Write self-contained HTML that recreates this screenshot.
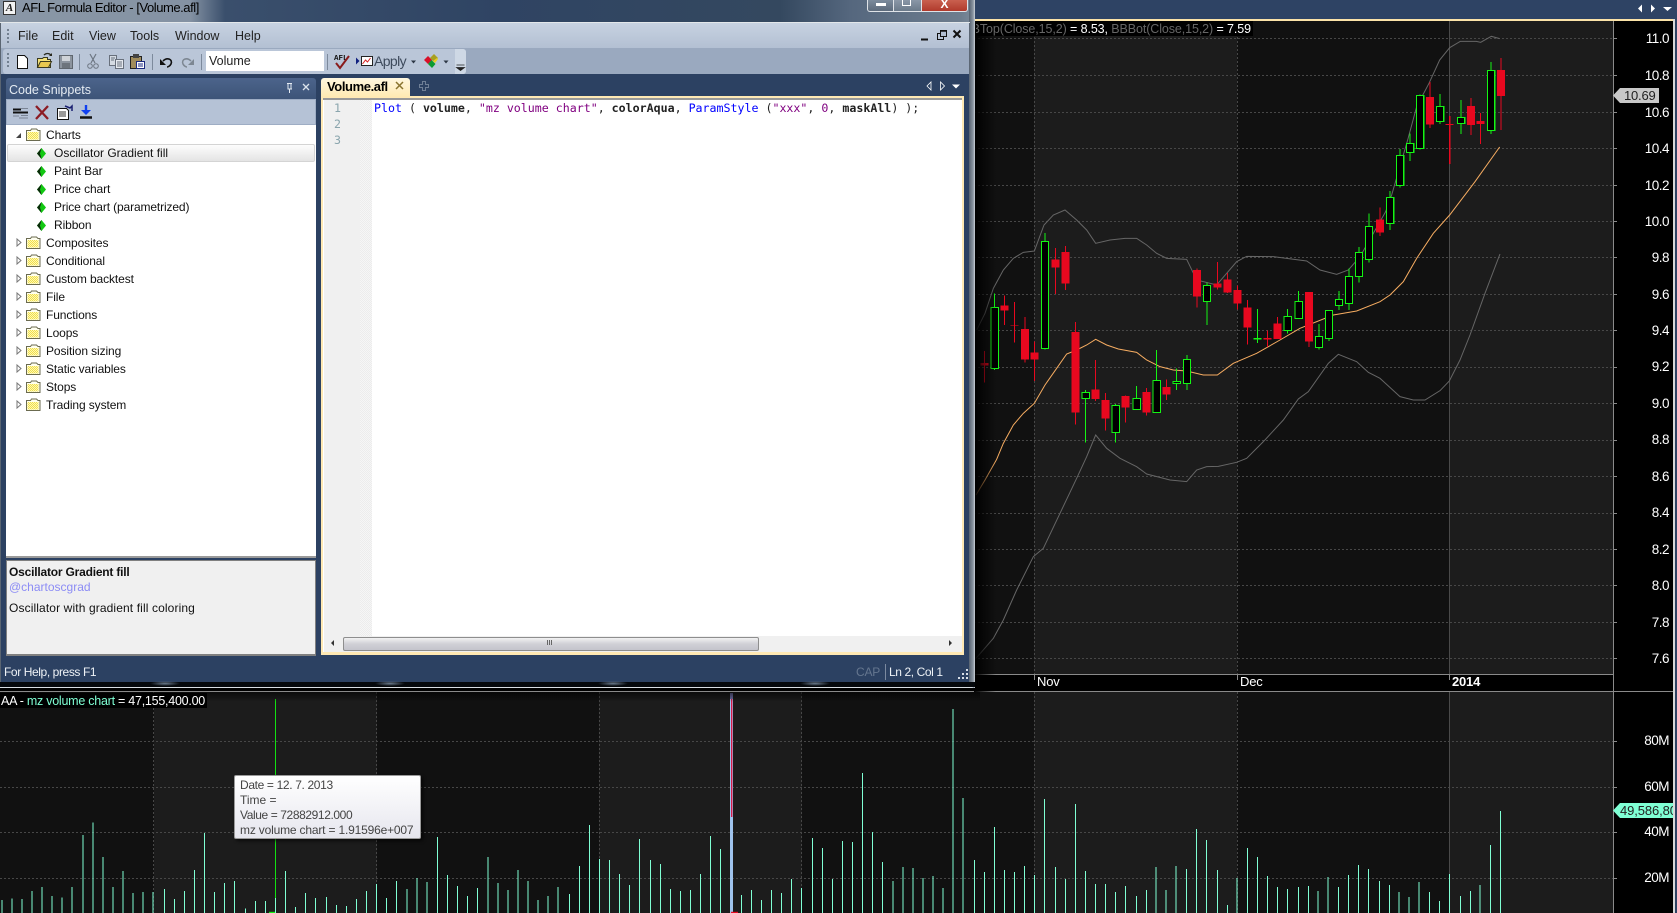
<!DOCTYPE html>
<html><head><meta charset="utf-8"><style>
html,body{margin:0;padding:0;background:#000}
#r{position:relative;width:1677px;height:913px;overflow:hidden;background:#000;font-family:"Liberation Sans",sans-serif;font-size:12px;color:#000}
.a{position:absolute;white-space:nowrap;line-height:16px}
.t{position:absolute;left:0;height:18px;line-height:18px;white-space:nowrap;letter-spacing:-.1px}
svg{position:absolute;left:0;top:0}
.ax{position:absolute;right:8px;color:#fff;font-size:13.5px;letter-spacing:-.5px;line-height:16px;text-align:right}
</style></head><body><div id="r">

<!-- chart tab bar -->
<div style="position:absolute;left:974px;top:0;width:703px;height:19px;background:#2e4364"></div>
<div style="position:absolute;left:974px;top:19px;width:700px;height:2px;background:#fbe3a8"></div>
<div style="position:absolute;left:1673px;top:19px;width:1.5px;height:894px;background:#d8d8d8"></div>
<div style="position:absolute;left:1675px;top:19px;width:2px;height:894px;background:#2e4364"></div>

<!-- bands top -->
<div style="position:absolute;left:974px;top:21px;width:60px;height:653px;background:#111"></div>
<div style="position:absolute;left:1034px;top:21px;width:203px;height:653px;background:#1c1c1c"></div>
<div style="position:absolute;left:1237px;top:21px;width:212px;height:653px;background:#111"></div>
<div style="position:absolute;left:1449px;top:21px;width:164px;height:653px;background:#1c1c1c"></div>
<!-- bands bottom -->
<div style="position:absolute;left:0;top:692px;width:154px;height:221px;background:#111"></div>
<div style="position:absolute;left:154px;top:692px;width:223px;height:221px;background:#1c1c1c"></div>
<div style="position:absolute;left:377px;top:692px;width:222px;height:221px;background:#111"></div>
<div style="position:absolute;left:599px;top:692px;width:203px;height:221px;background:#1c1c1c"></div>
<div style="position:absolute;left:802px;top:692px;width:232px;height:221px;background:#111"></div>
<div style="position:absolute;left:1034px;top:692px;width:203px;height:221px;background:#1c1c1c"></div>
<div style="position:absolute;left:1237px;top:692px;width:212px;height:221px;background:#111"></div>
<div style="position:absolute;left:1449px;top:692px;width:164px;height:221px;background:#1c1c1c"></div>

<svg width="1677" height="913" viewBox="0 0 1677 913" fill="none">
<!-- grid -->
<g stroke="#474747" stroke-width="1" stroke-dasharray="2 2" shape-rendering="crispEdges">
<path d="M974 38.500H1617M974 75.500H1617M974 112.500H1617M974 148.500H1617M974 185.500H1617M974 221.500H1617M974 257.500H1617M974 294.500H1617M974 330.500H1617M974 367.500H1617M974 403.500H1617M974 440.500H1617M974 476.500H1617M974 513.500H1617M974 549.500H1617M974 585.500H1617M974 622.500H1617M974 658.500H1617"/>
<path d="M1034.500 21V674M1237.500 21V674M0 741.500H1617M0 787.500H1617M0 832.500H1617M0 878.500H1617M153.500 692V913M376.500 692V913M599.500 692V913M801.500 692V913M1034.500 692V913M1237.500 692V913"/>
</g>
<path d="M1449.500 21V674M1449.500 692V913" stroke="#4a4a4a" shape-rendering="crispEdges"/>
<g stroke="#8a8a8a" shape-rendering="crispEdges">
<path d="M1613.500 21V913M974 674.500H1613.500M0 691.500H1673"/>
<path d="M1034.500 674V680M1237.500 674V680M1449.500 674V680"/>
<path d="M1613 38.500h4M1613 75.500h4M1613 112.500h4M1613 148.500h4M1613 185.500h4M1613 221.500h4M1613 257.500h4M1613 294.500h4M1613 330.500h4M1613 367.500h4M1613 403.500h4M1613 440.500h4M1613 476.500h4M1613 513.500h4M1613 549.500h4M1613 585.500h4M1613 622.500h4M1613 658.500h4M1613 741.500h4M1613 787.500h4M1613 832.500h4M1613 878.500h4"/>
</g>

<!-- price lines + candles in 3x space -->
<g transform="translate(970 200) scale(.33333)">
<polyline vector-effect="non-scaling-stroke" stroke="#666" stroke-width="1" points="20,390 45,340 70,265 100,210 130,175 160,157 193,153 222,75 250,45 285,30 320,60 350,90 377,130 420,120 465,115 500,115 530,135 560,160 590,175 650,178 680,240 740,255 770,220 800,185 830,169 910,170 1010,183 1050,210 1100,223 1135,210 1170,170 1210,100 1247,35 1265,-15 1313,-180 1340,-280 1377,-350 1409,-420 1439,-457 1471,-476 1519,-476 1532,-473 1564,-491 1589,-484"/>
<polyline vector-effect="non-scaling-stroke" stroke="#666" stroke-width="1" points="18,1375 70,1315 100,1260 140,1170 190,1070 220,1045 270,940 320,835 350,770 377,705 410,745 450,775 500,800 530,822 600,840 650,845 680,810 710,800 745,799 800,787 830,775 880,725 940,660 985,597 1015,575 1075,490 1105,463 1160,485 1195,517 1230,535 1290,590 1330,600 1365,600 1410,572 1438,543 1470,480 1500,405 1545,280 1590,162"/>
<polyline vector-effect="non-scaling-stroke" stroke="#f7ad62" stroke-width="1" points="18,885 45,840 80,778 100,730 130,675 160,640 193,610 225,555 260,505 290,462 320,450 350,435 377,418 410,435 445,447 500,457 530,480 570,500 610,510 650,513 700,525 742,525 790,490 860,460 930,420 990,385 1090,345 1160,333 1230,305 1260,285 1300,245 1340,175 1390,100 1439,45 1515,-55 1589,-159"/>
<path stroke="#e8081f" stroke-width="3.400" shape-rendering="crispEdges" d="M43 453V548M104 286V375M134 306V428M165 351V488M194 425V543M257 144V282M287 138V270M317 366V674M377 480V603M407 579V692M467 586V668M530 564V647M590 538V600M681 205V323M743 186V269M773 219V279M803 256V329M833 300V434M893 391V441M923 351V417M1017 276V441"/>
<path fill="#e8081f" shape-rendering="crispEdges" d="M31 489h24V497h-24zM92 316h24V332h-24zM122 375h24V377h-24zM153 387h24V479h-24zM182 457h24V479h-24zM245 178h24V203h-24zM275 156h24V251h-24zM305 396h24V638h-24zM365 568h24V597h-24zM395 600h24V656h-24zM455 588h24V623h-24zM518 576h24V638h-24zM578 561h24V584h-24zM669 210h24V290h-24zM731 250h24V263h-24zM761 238h24V278h-24zM791 270h24V311h-24zM821 322h24V383h-24zM881 414h24V418h-24zM911 370h24V417h-24zM1005 276h24V425h-24z"/>
<path stroke="#14f514" stroke-width="3.400" shape-rendering="crispEdges" d="M74 280V510M225 99V449M347 570V728M437 612V728M500 558V630M560 450V638M620 505V570M651 465V570M711 247V375M863 327V429M953 327V401M986 273V356M1047 372V449M1077 331V423M1107 273V330M1137 205V330M1167 141V248M1197 40V188"/>
<path fill="#000" stroke="#14f514" stroke-width="3.400" shape-rendering="crispEdges" d="M63 322h22V505h-22zM214 125h22V445h-22zM336 578h22V595h-22zM426 616h22V697h-22zM489 595h22V628h-22zM549 541h22V637h-22zM609 544h22V550h-22zM640 478h22V550h-22zM700 257h22V304h-22zM942 349h22V391h-22zM975 304h22V355h-22zM1036 409h22V442h-22zM1066 331h22V415h-22zM1096 298h22V316h-22zM1126 230h22V310h-22zM1156 157h22V229h-22zM1186 79h22V178h-22z"/>
<path fill="#14f514" shape-rendering="crispEdges" d="M851 414h24V418h-24z"/>
</g>
<!-- rest of candles, absolute -->
<path stroke="#e8081f" stroke-width="1.100" shape-rendering="crispEdges" d="M1380 207.300V236M1430 82V128M1449.700 116V164M1471 98V135M1480.600 113V144M1501 58V130"/>
<path fill="#e8081f" shape-rendering="crispEdges" d="M1376 219.300h8V232.700h-8zM1426 97h8V124.700h-8zM1445.500 124h8V125.200h-8zM1467 106h8V125h-8zM1476.600 121h8V124h-8zM1497 70h8V96h-8z"/>
<path stroke="#14f514" stroke-width="1.100" shape-rendering="crispEdges" d="M1390 191V230M1400 149V187.700M1410 133.300V161M1420 94.300V149.300M1440 94V124M1461 100V134M1491 62V134"/>
<path fill="#000" stroke="#14f514" stroke-width="1.100" shape-rendering="crispEdges" d="M1386.300 197.300h7.400V223.300h-7.400zM1396.300 155.300h7.400V185.300h-7.400zM1406.300 143.300h7.400V152.300h-7.400zM1416.300 95.300h7.400V148.300h-7.400zM1436.300 106.300h7.400V121.300h-7.400zM1457.300 117.300h7.400V123.300h-7.400zM1487.300 70.300h7.400V130.300h-7.400z"/>

<!-- crosshair + selected -->
<path d="M275.500 699V913" stroke="#12e012" stroke-width="1"/>
<path d="M269 912.500h6" stroke="#12ee12" stroke-width="1.400"/>
<rect x="730" y="693" width="3" height="220" fill="#9fc3ec"/>
<rect x="730" y="693" width="3" height="6" fill="#6f70a8"/>
<rect x="731" y="699" width="1.400" height="118" fill="#d81a48"/>
<path d="M731 912.500h7" stroke="#e8081f" stroke-width="1.400"/>

<!-- volume bars -->
<g stroke="#7fffd4" shape-rendering="crispEdges" transform="translate(0 680) scale(.35714 .33333)"><path vector-effect="non-scaling-stroke" stroke-width="1" d="M6 660V700M34 655V700M62 657V700M90 633V700M118 621V700M146 648V700M174 652V700M202 621V700M233 465V700M261 427V700M289 531V700M317 621V700M345 573V700M373 639V700M401 636V700M429 636V700M460 627V700M488 657V700M516 633V700M544 570V700M572 459V700M600 636V700M628 609V700M656 603V700M687 685V700M715 663V700M743 663V700M771 654V700M799 573V700M827 681V700M855 639V700M883 654V700M914 651V700M942 675V700M970 678V700M998 657V700M1026 633V700M1054 612V700M1082 654V700M1110 603V700M1140 627V700M1168 594V700M1196 606V700M1225 471V700M1253 585V700M1281 618V700M1309 648V700M1337 624V700M1367 531V700M1395 609V700M1423 630V700M1451 570V700M1479 603V700M1507 660V700M1535 648V700M1563 621V700"/></g>
<g stroke="#7fffd4" shape-rendering="crispEdges" transform="translate(560 680) scale(.35714 .33333)"><path vector-effect="non-scaling-stroke" stroke-width="1" d="M26 642V700M54 558V700M82 435V700M110 537V700M138 540V700M166 582V700M194 615V700M222 477V700M253 540V700M281 552V700M309 627V700M337 633V700M365 630V700M393 582V700M421 468V700M449 507V700M508 645V700M536 630V700M564 660V700M592 630V700M620 639V700M648 597V700M676 624V700M707 474V700M735 504V700M763 597V700M791 483V700M819 486V700M847 279V700M875 456V700M903 546V700M933 603V700M961 561V700M989 564V700M1017 594V700M1045 588V700M1073 624V700M1101 87V700M1129 354V700M1160 540V700M1188 576V700M1216 441V700M1244 570V700M1272 576V700M1300 558V700M1328 585V700M1356 357V700M1387 561V700M1415 597V700M1443 372V700M1471 573V700M1499 612V700M1527 612V700M1555 636V700"/></g>
<g stroke="#7fffd4" shape-rendering="crispEdges" transform="translate(1120 660) scale(.35524 .33333)"><path vector-effect="non-scaling-stroke" stroke-width="1" d="M15 678V760M46 708V760M74 690V760M102 621V760M130 690V760M158 618V760M187 627V760M215 507V760M243 540V760M274 630V760M302 735V760M330 654V760M359 564V760M387 591V760M415 648V760M443 681V760M471 687V760M502 681V760M530 678V760M558 693V760M586 651V760M615 681V760M643 645V760M671 615V760M699 627V760M730 663V760M758 675V760M786 696V760M814 711V760M842 666V760M871 696V760M899 723V760M927 642V760M958 708V760M986 693V760M1014 675V760M1043 555V760M1071 453V760"/></g>
</svg>

<!-- window shadow over chart -->
<div style="position:absolute;left:974px;top:21px;width:22px;height:671px;background:linear-gradient(90deg,#000,rgba(0,0,0,0))"></div>
<div style="position:absolute;left:0;top:692px;width:980px;height:10px;background:linear-gradient(180deg,rgba(0,0,0,.6),rgba(0,0,0,0))"></div>

<!-- legends -->
<div class="a" style="left:976px;top:21px;width:277px;height:15px;box-sizing:border-box;padding-right:2px;background:#000;overflow:hidden;font-size:12.5px;letter-spacing:-.1px;line-height:16px;color:#666;direction:rtl;text-align:right"><span style="direction:ltr;unicode-bidi:bidi-override">BBTop(Close,15,2) <span style="color:#fff">= 8.53,</span> BBBot(Close,15,2) <span style="color:#fff">= 7.59</span></span></div>
<div class="a" style="left:0;top:693px;width:207px;height:15px;padding-left:1px;box-sizing:border-box;background:#000;overflow:hidden;font-size:12.5px;letter-spacing:-.25px;line-height:16px;color:#fff">AA - <span style="color:#7fffd4">mz volume chart</span> = 47,155,400.00</div>

<!-- axis labels -->
<div class="ax" style="top:31px">11.0</div><div class="ax" style="top:68px">10.8</div><div class="ax" style="top:105px">10.6</div><div class="ax" style="top:141px">10.4</div><div class="ax" style="top:178px">10.2</div><div class="ax" style="top:214px">10.0</div><div class="ax" style="top:250px">9.8</div><div class="ax" style="top:287px">9.6</div><div class="ax" style="top:323px">9.4</div><div class="ax" style="top:359px">9.2</div><div class="ax" style="top:396px">9.0</div><div class="ax" style="top:432px">8.8</div><div class="ax" style="top:469px">8.6</div><div class="ax" style="top:505px">8.4</div><div class="ax" style="top:542px">8.2</div><div class="ax" style="top:578px">8.0</div><div class="ax" style="top:615px">7.8</div><div class="ax" style="top:651px">7.6</div>
<div class="ax" style="top:733px">80M</div><div class="ax" style="top:779px">60M</div><div class="ax" style="top:824px">40M</div><div class="ax" style="top:870px">20M</div>
<div class="a" style="left:1037px;top:674px;color:#fff;font-size:13px;letter-spacing:-.2px">Nov</div>
<div class="a" style="left:1240px;top:674px;color:#fff;font-size:13px;letter-spacing:-.2px">Dec</div>
<div class="a" style="left:1452px;top:674px;color:#fff;font-size:13px;letter-spacing:-.2px;font-weight:bold">2014</div>

<!-- value tags -->
<svg width="1677" height="913"><path d="M1613 95.500l7-7.500h39v15h-39z" fill="#c8c8c8"/><path d="M1613 810.500l7-7.500h53v15h-53z" fill="#7fffd4"/>
<g fill="#fff"><path d="M1642 4.500v8l-4-4zM1651 4.500v8l4-4zM1663 7h9l-4.500 4z"/></g></svg>
<div class="a" style="left:1624px;top:88px;color:#222;font-size:13px;letter-spacing:-.2px;line-height:15px">10.69</div>
<div class="a" style="left:1620px;top:803px;width:53px;overflow:hidden;color:#222;font-size:13px;letter-spacing:-.1px;line-height:15px">49,586,800</div>

<!-- tooltip -->
<div style="position:absolute;left:234px;top:775px;width:187px;height:64px;box-sizing:border-box;border:1px solid #9a9a9a;border-radius:2px;background:linear-gradient(180deg,#fff,#e6e6ee);box-shadow:2px 2px 3px rgba(0,0,0,.6);color:#444;font-size:12px;line-height:15px;padding:2px 0 0 5px;white-space:nowrap"><span style="letter-spacing:-.35px">Date = 12. 7. 2013</span><br>Time =<br><span style="letter-spacing:-.4px">Value = 72882912.000</span><br><span style="letter-spacing:-.18px">mz volume chart = 1.91596e+007</span></div>

<!-- ============ EDITOR WINDOW ============ -->
<div style="position:absolute;left:0;top:0;width:975px;height:23px;background:linear-gradient(90deg,#8a97a6 0,#8492a3 190px,#3a4f6c 225px,#2f4463 500px,#34485f 780px,#55677e 850px,#6d7d8e 960px,#7e8c9b 975px)"></div>
<div style="position:absolute;left:969px;top:0;width:6px;height:688px;background:linear-gradient(90deg,#55616f,#8c97a3 70%,#cdd3d9)"></div>
<div style="position:absolute;left:0;top:22px;width:970px;height:1px;background:#e3e7ea"></div>
<div class="a" style="left:22px;top:0;color:#000;font-size:13px;letter-spacing:-.45px;line-height:16px">AFL Formula Editor - [Volume.afl]</div>
<div style="position:absolute;left:3px;top:1px;width:11px;height:12px;border:1px solid #333;background:#f2f2f2;font:italic bold 11px/12px 'Liberation Serif',serif;text-align:center;color:#222">A</div>
<!-- caption buttons -->
<div style="position:absolute;left:867px;top:0;width:27px;height:12px;box-sizing:border-box;border:1px solid #dfe3e8;border-top:0;border-radius:0 0 0 3px;background:linear-gradient(#7c8b9c,#5d6b7c)"><div style="position:absolute;left:8px;top:3px;width:10px;height:3px;background:#fff"></div></div>
<div style="position:absolute;left:894px;top:0;width:27px;height:12px;box-sizing:border-box;border-bottom:1px solid #dfe3e8;background:linear-gradient(#8a97a7,#6b7a8a)"><div style="position:absolute;left:8px;top:-2px;width:9px;height:8px;box-sizing:border-box;border:1px solid #fff;border-top-width:2px"></div></div>
<div style="position:absolute;left:921px;top:0;width:47px;height:12px;box-sizing:border-box;border:1px solid #dfe3e8;border-top:0;border-radius:0 0 3px 0;background:linear-gradient(#c9604f,#b03a2c);color:#fff;font:bold 12px/8px 'Liberation Sans',sans-serif;text-align:center">X</div>

<!-- client -->
<div style="position:absolute;left:0;top:23px;width:969px;height:659px;background:#2c4162;box-sizing:border-box;border-left:1px solid #5a6572"></div>
<div style="position:absolute;left:1px;top:23px;width:968px;height:26px;background:linear-gradient(#c7d2e1,#b2bfd2)"></div>
<div style="position:absolute;left:1px;top:48px;width:968px;height:26px;background:#9aa9bf"></div>
<div style="position:absolute;left:3px;top:49px;width:463px;height:25px;background:#bac6d8;border-radius:3px"></div>
<div style="position:absolute;left:455px;top:49px;width:11px;height:25px;background:#ced8e5;border-radius:0 3px 3px 0"></div>
<div style="position:absolute;left:206px;top:51px;width:118px;height:20px;background:#fff"></div>
<div class="a" style="left:209px;top:53px;color:#222;font-size:12.5px">Volume</div>
<div class="a" style="left:18px;top:28px;font-size:12.5px;color:#222">File</div>
<div class="a" style="left:52px;top:28px;font-size:12.5px;color:#222">Edit</div>
<div class="a" style="left:89px;top:28px;font-size:12.5px;color:#222">View</div>
<div class="a" style="left:130px;top:28px;font-size:12.5px;color:#222">Tools</div>
<div class="a" style="left:175px;top:28px;font-size:12.5px;color:#222">Window</div>
<div class="a" style="left:235px;top:28px;font-size:12.5px;color:#222">Help</div>
<div class="a" style="left:374px;top:53px;font-size:14px;letter-spacing:-.6px;color:#3d4a5c">Apply</div>

<!-- left panel -->
<div style="position:absolute;left:6px;top:78px;width:310px;height:21px;background:linear-gradient(#4c648b,#3d5478);border-radius:3px 3px 0 0"></div>
<div class="a" style="left:9px;top:82px;color:#e4ebf2;font-size:12.5px">Code Snippets</div>
<div style="position:absolute;left:6px;top:99px;width:310px;height:26px;background:#b5c2d6;box-sizing:border-box;border:1px solid #9eadc4"></div>
<div style="position:absolute;left:6px;top:125px;width:310px;height:431px;background:#fff"></div>
<div style="position:absolute;left:6px;top:556px;width:310px;height:2px;background:#9a9a9a"></div>
<div style="position:absolute;left:6px;top:560px;width:310px;height:96px;background:#f0f0f0;box-sizing:border-box;border:1px solid #808080;border-bottom-width:2px"></div>
<div style="position:absolute;left:7px;top:144px;width:308px;height:18px;box-sizing:border-box;border:1px solid #d4d4d4;border-radius:2px;background:linear-gradient(#fdfdfd,#e4e4e4)"></div>

<div id="tree" style="position:absolute;left:0;top:126px;font-size:12px;color:#111">
<div class="t" style="top:0;left:46px">Charts</div>
<div class="t" style="top:18px;left:54px;letter-spacing:0">Oscillator Gradient fill</div>
<div class="t" style="top:36px;left:54px">Paint Bar</div>
<div class="t" style="top:54px;left:54px">Price chart</div>
<div class="t" style="top:72px;left:54px;letter-spacing:-.13px">Price chart (parametrized)</div>
<div class="t" style="top:90px;left:54px">Ribbon</div>
<div class="t" style="top:108px;left:46px">Composites</div>
<div class="t" style="top:126px;left:46px">Conditional</div>
<div class="t" style="top:144px;left:46px">Custom backtest</div>
<div class="t" style="top:162px;left:46px">File</div>
<div class="t" style="top:180px;left:46px">Functions</div>
<div class="t" style="top:198px;left:46px">Loops</div>
<div class="t" style="top:216px;left:46px">Position sizing</div>
<div class="t" style="top:234px;left:46px">Static variables</div>
<div class="t" style="top:252px;left:46px">Stops</div>
<div class="t" style="top:270px;left:46px">Trading system</div>
</div>

<div class="a" style="left:9px;top:564px;font-weight:bold;letter-spacing:-.2px;color:#111">Oscillator Gradient fill</div>
<div class="a" style="left:9px;top:579px;color:#8c8cf5">@chartoscgrad</div>
<div class="a" style="left:9px;top:600px;color:#111;letter-spacing:.12px">Oscillator with gradient fill coloring</div>

<!-- tabs + editor -->
<div style="position:absolute;left:321px;top:78px;width:89px;height:20px;border-radius:3px 3px 0 0;background:linear-gradient(#fff7df,#ffe9b0)"></div>
<div class="a" style="left:327px;top:79px;font-weight:bold;font-size:13px;letter-spacing:-.4px;color:#000">Volume.afl</div>
<div style="position:absolute;left:321px;top:96px;width:643px;height:559px;background:#ffe9b4"></div>
<div style="position:absolute;left:323px;top:98px;width:639px;height:2px;background:#999"></div>
<div style="position:absolute;left:323px;top:100px;width:639px;height:552px;background:#fff"></div>
<div style="position:absolute;left:324px;top:100px;width:36px;height:536px;background:#f0f0f0"></div>
<div style="position:absolute;left:360px;top:100px;width:12px;height:536px;background:repeating-conic-gradient(#f6f6f6 0 25%,#ececec 0 50%) 0 0/2px 2px"></div>
<div class="a" style="left:334px;top:100px;color:#8aa5ad;font:11.6px/16px 'DejaVu Sans Mono',monospace">1</div>
<div class="a" style="left:334px;top:116px;color:#8aa5ad;font:11.6px/16px 'DejaVu Sans Mono',monospace">2</div>
<div class="a" style="left:334px;top:132px;color:#8aa5ad;font:11.6px/16px 'DejaVu Sans Mono',monospace">3</div>
<div class="a" style="left:374px;top:100px;font:11.62px/16px 'DejaVu Sans Mono',monospace;color:#222;white-space:pre"><span style="color:#00f">Plot</span> ( <b>volume</b>, <span style="color:#800080">"mz volume chart"</span>, <b>colorAqua</b>, <span style="color:#00f">ParamStyle</span> (<span style="color:#800080">"xxx"</span>, <span style="color:#800080">0</span>, <b>maskAll</b>) );</div>
<!-- scrollbar -->
<div style="position:absolute;left:324px;top:636px;width:638px;height:16px;background:#f0f0f0"></div>
<div style="position:absolute;left:343px;top:637px;width:416px;height:14px;box-sizing:border-box;border:1px solid #8e8e8e;border-radius:2px;background:linear-gradient(#f2f2f2,#d0d0d6 50%,#c4c4cc)"></div>

<!-- status -->
<div class="a" style="left:4px;top:664px;color:#eef2f6;letter-spacing:-.4px">For Help, press F1</div>
<div class="a" style="left:856px;top:664px;color:#65768f;letter-spacing:-.2px">CAP</div>
<div class="a" style="left:889px;top:664px;color:#eef2f6;letter-spacing:-.4px">Ln 2, Col 1</div>
<div style="position:absolute;left:0;top:682px;width:975px;height:5px;background:#05080c"></div>
<div style="position:absolute;left:0;top:687px;width:973px;height:1px;background:#d8dde2;border-radius:0 0 3px 0"></div>
<div style="position:absolute;left:150px;top:681px;width:30px;height:5px;background:radial-gradient(closest-side,#6a7a8c,rgba(0,0,0,0))"></div>
<div style="position:absolute;left:375px;top:681px;width:30px;height:5px;background:radial-gradient(closest-side,#6a7a8c,rgba(0,0,0,0))"></div>
<div style="position:absolute;left:598px;top:681px;width:30px;height:5px;background:radial-gradient(closest-side,#6a7a8c,rgba(0,0,0,0))"></div>
<div style="position:absolute;left:800px;top:681px;width:30px;height:5px;background:radial-gradient(closest-side,#6a7a8c,rgba(0,0,0,0))"></div>

<!-- icons -->
<svg width="980" height="690" viewBox="0 0 980 690" fill="none">
<defs>
<pattern id="dy" width="2" height="2" patternUnits="userSpaceOnUse"><rect width="2" height="2" fill="#fffbb0"/><rect width="1" height="1" fill="#f0dc50"/><rect x="1" y="1" width="1" height="1" fill="#f0dc50"/></pattern>
<g id="fo"><path d="M.5 2.500h4l1-1.500h5l1.500 1.500h2v10h-13.500z" fill="#fffff0" stroke="#6b6b50"/><path d="M1.500 4h11v7.500h-11z" fill="url(#dy)"/></g>
<g id="ge"><path d="M0 5.500L4.500 0 9 5.500 4.500 11z" fill="#12c812"/><path d="M0 5.500L4.500 0 3 5.500 4.500 11z" fill="#0a2a0a"/></g>
<path id="tr" d="M0 0l4 3.500-4 3.500z" fill="#fff" stroke="#777"/>
</defs>
<!-- grippers -->
<path d="M8 29v2M8 33v2M8 37v2M8 41v2M8 53v2M8 57v2M8 61v2M8 65v2" stroke="#5a6878" stroke-width="1.500"/>
<path d="M79.500 54V70M152.500 54V70M201.500 54V70M327.500 54V70" stroke="#7d8a9c"/>
<!-- new -->
<path d="M17.500 55.500h7l3 3v10h-10z" fill="#fff" stroke="#111"/>
<!-- open -->
<path d="M37.500 67.500v-9h5l1-1h4v2h3v8z" fill="#f4e27a" stroke="#3a3a20"/><path d="M37.500 67.500l3-6h11l-3 6z" fill="#e8c850" stroke="#3a3a20"/><path d="M44 55c2-2 5-2 7 0" stroke="#2a2a20" stroke-width="1.300"/><path d="M52 53v3h-3z" fill="#2a2a20"/>
<!-- save -->
<rect x="59.500" y="55.500" width="13" height="13" fill="#8c949e" stroke="#5f666e"/><rect x="62" y="56" width="8" height="5" fill="#cfd3d8"/><rect x="62" y="63" width="8" height="5" fill="#6d747c"/>
<!-- cut -->
<path d="M90 54l5 9M96 54l-5 9" stroke="#6d7682" stroke-width="1.200"/><circle cx="90" cy="66" r="2.300" stroke="#6d7682"/><circle cx="96" cy="66" r="2.300" stroke="#6d7682"/>
<!-- copy -->
<path d="M109.500 55.500h7v10h-7z" fill="#d5dbe3" stroke="#68707c"/><path d="M115.500 59.500h8v9h-8z" fill="#e6eaf0" stroke="#68707c"/><path d="M111 58h4M111 60h3M117 62h5M117 64h5M117 66h5" stroke="#68707c"/>
<!-- paste -->
<path d="M130.500 56.500h11v12h-11z" fill="#a08c5c" stroke="#222"/><rect x="133" y="54" width="6" height="4" fill="#444"/><path d="M136.500 61.500h8v7h-8z" fill="#fff" stroke="#1a2a80"/><path d="M138 64h5M138 66h5" stroke="#1a2a80"/>
<!-- undo redo -->
<path d="M163 61c4-4 10-2 8 3-1 2-3 3-4 3" stroke="#111" stroke-width="1.600"/><path d="M160 59v6h6z" fill="#111"/>
<path d="M191 61c-4-4-10-2-8 3 1 2 3 3 4 3" stroke="#7d8792" stroke-width="1.500"/><path d="M194 59v6h-6z" fill="#7d8792"/>
<!-- AFL check -->
<text x="334" y="60" font-family="'Liberation Mono',monospace" font-size="7.500" font-weight="bold" fill="#111">AFL</text>
<path d="M336 63l4 5 9-12" stroke="#8a1c1c" stroke-width="2"/>
<!-- apply -->
<path d="M356 57.500v7l3.500-3.500z" fill="#102080"/><rect x="361.500" y="56.500" width="11" height="9" fill="#fff" stroke="#222"/><path d="M362.500 64l3-4 2 2 3-4" stroke="#d82020"/>
<path d="M411 60.500h5l-2.500 3z" fill="#2c3644"/>
<!-- colors -->
<path d="M424 60l4-4 4 4-4 4z" fill="#d81028"/><path d="M430 58l4-4 4 4-4 4z" fill="#a8a020"/><path d="M428 64l3.500-4 4 4-3.500 4z" fill="#0c9a30"/><path d="M433 61l4-3 1 1-3 4z" fill="#e8d020"/>
<path d="M443.500 60.500h5l-2.500 3z" fill="#2c3644"/>
<path d="M456.500 65h8M456.500 67.500h8l-4 3z" fill="#222" stroke="#222" stroke-width=".8"/>
<!-- win controls -->
<path d="M921 39.500h7" stroke="#111" stroke-width="2"/>
<rect x="937.500" y="33.500" width="6" height="6" stroke="#111"/><rect x="940.500" y="30.500" width="6" height="6" stroke="#111" fill="#b2bfd2"/><path d="M940 31h7" stroke="#111" stroke-width="1.500"/>
<path d="M953.500 30.500l7 7M960.500 30.500l-7 7" stroke="#111" stroke-width="2"/>
<!-- panel header btns -->
<path d="M287 83.500h5M288 84v5h3v-5M289.500 89v4" stroke="#e4ebf2"/><path d="M288 89h4" stroke="#e4ebf2"/>
<path d="M303 84l6 6M309 84l-6 6" stroke="#dbe3ec" stroke-width="1.300"/>
<!-- panel tools -->
<path d="M13 109.500h8" stroke="#111" stroke-width="2"/><path d="M13 112.500h15" stroke="#111" stroke-width="2"/><path d="M21 108.500h7M21 115.500h7M19 118h9" stroke="#7a8494"/><path d="M13 116h6" stroke="#7a8494"/>
<path d="M36 106l12 13M48 106l-12 13" stroke="#8c1c24" stroke-width="2.300"/>
<path d="M57.500 108.500h9l2 2v9h-11z" fill="#fff" stroke="#111"/><path d="M59 112h7M59 114h7M59 116h7" stroke="#333"/><path d="M65 106l5 2 2-2v5" stroke="#1a2070" stroke-width="1.500"/>
<path d="M86 105v6" stroke="#1040f0" stroke-width="2.400"/><path d="M81 110h10l-5 5z" fill="#1040f0"/><path d="M80 117.500h12" stroke="#111" stroke-width="2.500"/>
<!-- tree icons -->
<path d="M16 138l5 0 0-5z" fill="#444"/>
<use href="#fo" x="26" y="128"/>
<use href="#ge" x="37" y="148"/><use href="#ge" x="37" y="166"/><use href="#ge" x="37" y="184"/><use href="#ge" x="37" y="202"/><use href="#ge" x="37" y="220"/>
<use href="#tr" x="17" y="239"/><use href="#tr" x="17" y="257"/><use href="#tr" x="17" y="275"/><use href="#tr" x="17" y="293"/><use href="#tr" x="17" y="311"/><use href="#tr" x="17" y="329"/><use href="#tr" x="17" y="347"/><use href="#tr" x="17" y="365"/><use href="#tr" x="17" y="383"/><use href="#tr" x="17" y="401"/>
<use href="#fo" x="26" y="236"/><use href="#fo" x="26" y="254"/><use href="#fo" x="26" y="272"/><use href="#fo" x="26" y="290"/><use href="#fo" x="26" y="308"/><use href="#fo" x="26" y="326"/><use href="#fo" x="26" y="344"/><use href="#fo" x="26" y="362"/><use href="#fo" x="26" y="380"/><use href="#fo" x="26" y="398"/>
<!-- tab x + add -->
<path d="M396 82l7 7M403 82l-7 7" stroke="#8a7430" stroke-width="1.500"/>
<path d="M422.500 81.500h3v3h3v3h-3v3h-3v-3h-3v-3h3z" stroke="#6f7f96"/>
<!-- tab row arrows -->
<path d="M931 82v8l-4-4zM940.500 82v8l4-4z" stroke="#fff" stroke-width=".8"/><path d="M952 84.500h8l-4 4z" fill="#fff"/>
<!-- scroll arrows -->
<path d="M334 640v6l-3-3zM949 640v6l3-3z" fill="#333"/>
<path d="M547.500 640v5M549.500 640v5M551.500 640v5" stroke="#666"/>
<!-- status sep/grip -->
<path d="M885.500 664V680" stroke="#7c8aa0"/>
<path d="M966 677h2v2h-2zM962 677h2v2h-2zM958 677h2v2h-2zM966 673h2v2h-2zM962 673h2v2h-2zM966 669h2v2h-2z" fill="#d8dee6"/>
</svg>
</div></body></html>
